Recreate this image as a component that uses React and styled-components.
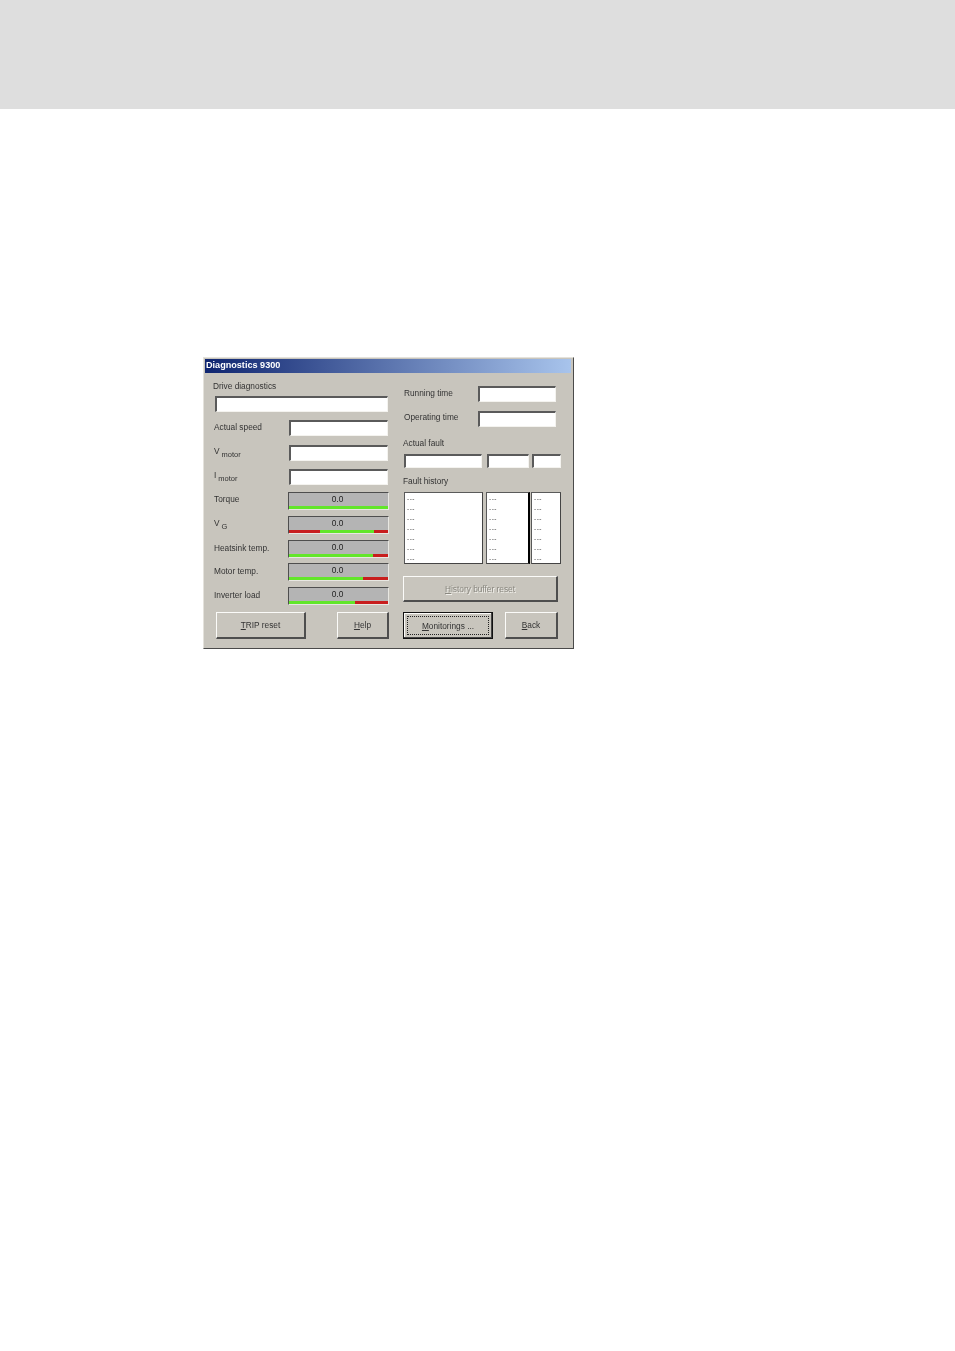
import React from "react";
import styled, { createGlobalStyle, css } from "styled-components";

const GlobalStyle = createGlobalStyle`
  html, body {
    margin: 0;
    padding: 0;
    background: #fff;
    font-family: "Liberation Sans", Arial, sans-serif;
  }
`;

const green = "#62e62a";
const red = "#c81e1e";

const sunken = css`
  box-sizing: border-box;
  background: #fff;
  border-style: solid;
  border-width: 2px 1px 1px 2px;
  border-color: #5a5a5a #f4f3ef #f4f3ef #5a5a5a;
`;

const raised = css`
  box-sizing: border-box;
  background: #c8c5bd;
  border-style: solid;
  border-width: 1px 2px 2px 1px;
  border-color: #fbfbf9 #4e4e4e #4e4e4e #fbfbf9;
`;

const Page = styled.div`
  width: 955px;
  height: 1351px;
  overflow: hidden;
`;

const HeaderBand = styled.div`
  height: 109px;
  background: #dedede;
`;

const Dialog = styled.div`
  box-sizing: border-box;
  width: 371px;
  height: 292px;
  margin: 248px 0 0 203px;
  padding: 1px 2px 2px 1px;
  background: #c8c5bd;
  border: 1px solid;
  border-color: #e4e2dc #4a4a4a #4a4a4a #e4e2dc;
  color: #333;
  font-size: 8.3px;
  filter: blur(0.3px);
`;

const TitleBar = styled.div`
  height: 14px;
  padding-left: 1px;
  background: linear-gradient(90deg, #0f2570 0%, #a8c4ec 100%);
  color: #fff;
  font-size: 9.1px;
  font-weight: bold;
  line-height: 13px;
`;

const Body = styled.div`
  display: flex;
  padding-left: 8px;
`;

const LeftColumn = styled.div`
  width: 176px;
  margin-right: 14px;
`;

const RightColumn = styled.div`
  width: 159px;
`;

const Label = styled.div`
  height: 12px;
  margin-top: ${(p) => p.$top || 0}px;
  line-height: 12px;
  white-space: nowrap;
`;

const Row = styled.div`
  display: flex;
  align-items: center;
  justify-content: space-between;
  margin-top: ${(p) => p.$top || 0}px;
  margin-right: ${(p) => p.$right || 0}px;
`;

const RowLabel = styled.span`
  padding-left: 1px;
  margin-bottom: ${(p) => (p.$up || 0) * 2}px;
  white-space: nowrap;
`;

const Field = styled.div`
  ${sunken}
  width: ${(p) => p.$width}px;
  height: ${(p) => p.$height || 16}px;
  margin-top: ${(p) => p.$top || 0}px;
  margin-left: ${(p) => p.$left || 0}px;
  margin-right: ${(p) => p.$right || 0}px;
`;

const Sub = styled.span`
  position: relative;
  top: 3px;
  margin-left: 2px;
  font-size: 7.5px;
`;

const MeterBox = styled.div`
  box-sizing: border-box;
  display: flex;
  flex-direction: column;
  width: 101px;
  height: 18px;
  background: #b4b4b4;
  border-style: solid;
  border-width: 1px;
  border-color: #4e4e4e #e8e7e2 #e8e7e2 #4e4e4e;
`;

const MeterValue = styled.div`
  flex: 1;
  padding-right: 2px;
  color: #222;
  line-height: 13px;
  text-align: center;
`;

const MeterBar = styled.div`
  display: flex;
  height: 3px;
`;

const Segment = styled.div`
  flex: ${(p) => p.$size} 0 0;
  background: ${(p) => p.$color};
`;

const Button = styled.div`
  ${raised}
  display: flex;
  align-items: center;
  justify-content: center;
  width: ${(p) => p.$width}px;
  height: ${(p) => p.$height || 27}px;
  margin-top: ${(p) => p.$top || 0}px;
  margin-left: ${(p) => p.$left || 0}px;
  color: ${(p) => (p.$disabled ? "#8a8880" : "#333")};
  text-shadow: ${(p) => (p.$disabled ? "1px 1px 0 #f2f1ec" : "none")};
`;

const FocusButton = styled(Button)`
  position: relative;
  border: 1px solid #111;
  box-shadow: inset -1px -1px 0 #444, inset 1px 1px 0 #fbfbf9;

  &::after {
    content: "";
    position: absolute;
    inset: 3px;
    border: 1px dotted #222;
  }
`;

const Lists = styled.div`
  display: flex;
  margin-top: 5px;
`;

const FaultList = styled.div`
  ${sunken}
  width: ${(p) => p.$width}px;
  height: 72px;
  margin-left: ${(p) => p.$left || 0}px;
  padding: 1px 0 0 2px;
  border-width: ${(p) => (p.$heavy ? "1px 2px 1px 1px" : "1px")};
  border-color: #5a5a5a #444 #444 #5a5a5a;
  border-right-color: ${(p) => (p.$heavy ? "#000" : "#444")};
  font-size: 6.5px;
`;

const FaultLine = styled.div`
  height: 10px;
  line-height: 10px;
  color: #444;
  letter-spacing: 0.5px;
`;

const meters = [
  { label: "Torque", up: 2, top: 7, segments: [[99, green]] },
  { label: <>V<Sub>G</Sub></>, up: 2, top: 6, segments: [[31, red], [54, green], [14, red]] },
  { label: "Heatsink temp.", up: 1, top: 6, segments: [[84, green], [15, red]] },
  { label: "Motor temp.", up: 1, top: 5, segments: [[74, green], [25, red]] },
  { label: "Inverter load", up: 1, top: 6, segments: [[66, green], [33, red]] },
];

const FaultColumn = ({ width, left, heavy }) => (
  <FaultList $width={width} $left={left} $heavy={heavy}>
    {Array.from({ length: 7 }, (_, i) => (
      <FaultLine key={i}>---</FaultLine>
    ))}
  </FaultList>
);

const MeterRow = ({ label, segments, top, up }) => (
  <Row $top={top}>
    <RowLabel $up={up}>{label}</RowLabel>
    <MeterBox>
      <MeterValue>0.0</MeterValue>
      <MeterBar>
        {segments.map(([size, color], i) => (
          <Segment key={i} $size={size} $color={color} />
        ))}
      </MeterBar>
    </MeterBox>
  </Row>
);

export default function App() {
  return (
    <Page>
      <GlobalStyle />
      <HeaderBand />
      <Dialog>
        <TitleBar>Diagnostics 9300</TitleBar>
        <Body>
          <LeftColumn>
            <Label $top={7}>Drive diagnostics</Label>
            <Field $width={173} $top={4} $left={2} />
            <Row $top={8}>
              <RowLabel $up={1}>Actual speed</RowLabel>
              <Field $width={99} $right={1} />
            </Row>
            <Row $top={9}>
              <RowLabel $up={2}>V<Sub>motor</Sub></RowLabel>
              <Field $width={99} $right={1} />
            </Row>
            <Row $top={8}>
              <RowLabel $up={2}>I<Sub>motor</Sub></RowLabel>
              <Field $width={99} $right={1} />
            </Row>
            {meters.map((meter, i) => (
              <MeterRow key={i} {...meter} />
            ))}
            <Row $top={7}>
              <Button $width={90} $left={3}>
                <span><u>T</u>RIP reset</span>
              </Button>
              <Button $width={52}>
                <span><u>H</u>elp</span>
              </Button>
            </Row>
          </LeftColumn>
          <RightColumn>
            <Row $top={13} $right={6}>
              <RowLabel $up={1}>Running time</RowLabel>
              <Field $width={78} />
            </Row>
            <Row $top={9} $right={6}>
              <RowLabel $up={2}>Operating time</RowLabel>
              <Field $width={78} />
            </Row>
            <Label $top={10}>Actual fault</Label>
            <Row $top={5}>
              <Field $width={78} $height={14} $left={1} />
              <Field $width={42} $height={14} $left={4} />
              <Field $width={29} $height={14} $left={2} $right={1} />
            </Row>
            <Label $top={7}>Fault history</Label>
            <Lists>
              <FaultColumn width={79} left={1} />
              <FaultColumn width={44} left={3} heavy />
              <FaultColumn width={30} left={1} />
            </Lists>
            <Button $width={155} $height={26} $disabled $top={12}>
              <span><u>H</u>istory buffer reset</span>
            </Button>
            <Row $top={10} $right={4}>
              <FocusButton $width={90}>
                <span><u>M</u>onitorings ...</span>
              </FocusButton>
              <Button $width={53}>
                <span><u>B</u>ack</span>
              </Button>
            </Row>
          </RightColumn>
        </Body>
      </Dialog>
    </Page>
  );
}
